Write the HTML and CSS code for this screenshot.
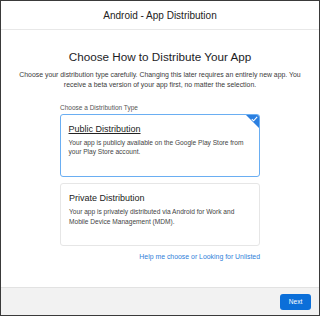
FILE: index.html
```html
<!DOCTYPE html>
<html lang="en">
<head>
    <meta charset="UTF-8">
    <meta name="viewport" content="width=device-width, initial-scale=1.0">
    <title>Android - App Distribution</title>
    <link rel="stylesheet" href="styles.css">
</head>
<body>
    <div class="frame">
        <div class="header">Android - App Distribution</div>

        <div class="main">
            <h1>Choose How to Distribute Your App</h1>
            <p class="intro">Choose your distribution type carefully. Changing this later requires an entirely new app. You receive a beta version of your app first, no matter the selection.</p>

            <div class="choices">
                <div class="choices-label">Choose a Distribution Type</div>

                <div class="card selected">
                    <span class="check">
                        <svg width="7" height="6" viewBox="0 0 7 6"><path d="M0.8 3.1 L2.6 4.8 L6.2 0.9" fill="none" stroke="#fff" stroke-width="1.1"/></svg>
                    </span>
                    <div class="card-title"><u>Public Distribution</u></div>
                    <div class="card-text">Your app is publicly available on the Google Play Store from your Play Store account.</div>
                </div>

                <div class="card">
                    <div class="card-title">Private Distribution</div>
                    <div class="card-text">Your app is privately distributed via Android for Work and Mobile Device Management (MDM).</div>
                </div>

                <div class="help"><a href="#">Help me choose or Looking for Unlisted</a></div>
            </div>
        </div>

        <div class="footer">
            <button class="next">Next</button>
        </div>
    </div>
</body>
</html>
```

FILE: styles.css
```css
body {
    margin: 0;
    font-family: "Liberation Sans", Arial, sans-serif;
    background: #fff;
}
.frame {
    width: 320px;
    height: 316px;
    box-sizing: border-box;
    border: 1px solid #3a3a3a;
    display: flex;
    flex-direction: column;
    background: #fff;
}
.header {
    height: 28px;
    flex: none;
    border-bottom: 1px solid #e8e8e8;
    display: flex;
    align-items: center;
    justify-content: center;
    font-size: 10px;
    color: #222;
}
.main {
    flex: 1;
    padding-top: 19px;
    text-align: center;
}
h1 {
    margin: 0;
    font-size: 11.7px;
    line-height: 16px;
    font-weight: normal;
    color: #1d1d1f;
}
.intro {
    margin: 5px auto 0;
    width: 290px;
    font-size: 6.9px;
    line-height: 10px;
    color: #3a3a3a;
}
.choices {
    width: 200px;
    margin: 13px auto 0;
    text-align: left;
}
.choices-label {
    font-size: 6.5px;
    line-height: 9px;
    color: #555;
    margin-bottom: 2px;
}
.card {
    position: relative;
    box-sizing: border-box;
    height: 63px;
    padding: 8px 8px 0 8px;
    border: 1px solid #e6e6e6;
    border-radius: 3px;
    margin-bottom: 6px;
    overflow: hidden;
}
.card.selected {
    border: 1.5px solid #6aaef2;
    padding: 7.5px 7.5px 0 7.5px;
}
.check {
    position: absolute;
    top: 0;
    right: 0;
    width: 0;
    height: 0;
    border-top: 13px solid #2b7fe0;
    border-left: 13px solid transparent;
}
.check svg {
    position: absolute;
    top: -12px;
    right: 1px;
}
.card-title {
    font-size: 9px;
    line-height: 12px;
    color: #222;
    margin-bottom: 3px;
}
.card-text {
    font-size: 6.6px;
    line-height: 9.5px;
    color: #444;
    padding-right: 2px;
}
.help {
    text-align: right;
    font-size: 6.9px;
    line-height: 10px;
}
.help a {
    color: #2f80d9;
    text-decoration: none;
}
.footer {
    height: 28px;
    flex: none;
    box-sizing: border-box;
    border-top: 1px solid #e2e2e2;
    background: #f2f2f2;
    display: flex;
    align-items: center;
    justify-content: flex-end;
    padding-right: 8px;
}
.next {
    width: 31px;
    height: 16px;
    padding: 0;
    border: none;
    border-radius: 3px;
    background: #0b6fd9;
    color: #fff;
    font-family: "Liberation Sans", Arial, sans-serif;
    font-size: 6.6px;
}
```
